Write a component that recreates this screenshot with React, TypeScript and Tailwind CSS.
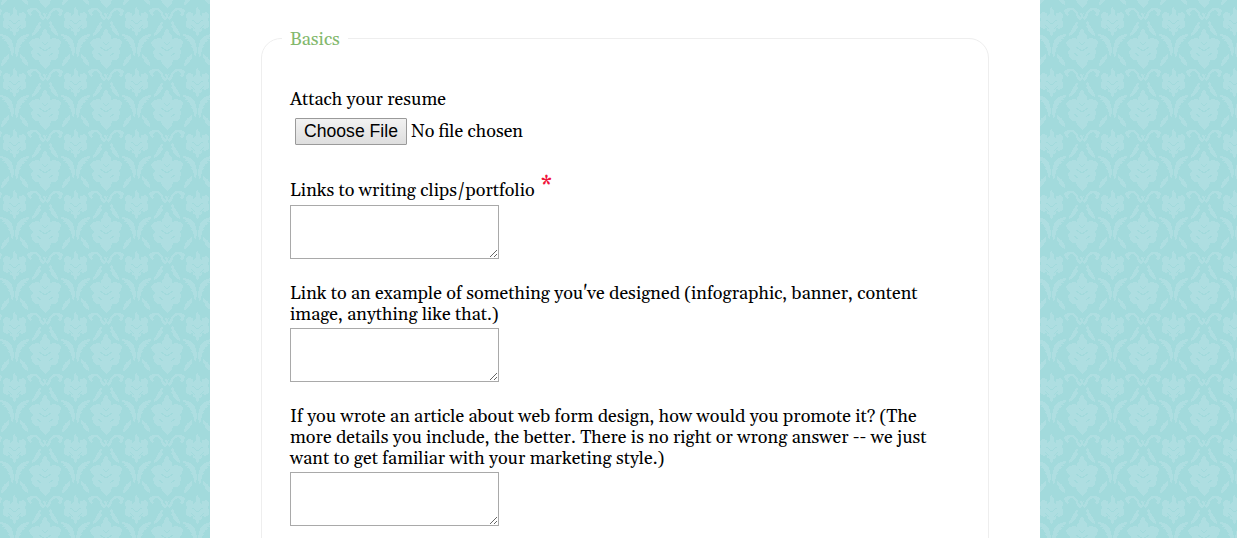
import React from 'react';

const font = "font-['Gelasio','Georgia','Liberation_Serif',serif]";
const base = '#a2dadc';

// half of the damask motif, the other half is mirrored
const LargeHalf = () => (
  <>
    <path d="M45 28l2 3 1 3 2 2 0 3 3-1 5 1 3 3-1 4-3 3 2 2-1 6-3 3-4 0-1 4-2 2-2 2-1 1z" />
    <path d="M45 51l6-4" fill="none" stroke={base} strokeWidth="1" />
    <path d="M45 45l3-3M49 56l4-3" fill="none" stroke={base} strokeWidth="1" />
  </>
);

const SmallHalf = () => (
  <>
    <path d="M14.500 7l2 3 0 4 2 2 1-3 4-1 2 2 1 3-2 2 2 4-1 4-3 2-3-1-1 3-2 1-1 3-1 1z" />
    <path d="M14.500 24l5-4M17 29l4-4" fill="none" stroke={base} strokeWidth="1" />
    {/* curl */}
    <path d="M27 10l4-2 5 0 3 2 2 3 1 3 3 2-2 2-3-2-1-4-2-3-3-1-2 1-1 2 1 2-2 1-2-2z" />
    {/* sprig */}
    <path d="M40 21l1 2-1 2 1 2-2 2 0 2-2 1-1 2-4 2 0-3 2-1-1-1 2-1-1-1 2-1 0-2 2-1 0-2z" />
    {/* feather */}
    <path d="M16 57l-1-7 1-6 2-5 4-3 5-2 2 0 0 2-3 1 1 2-3 0 1 2-3 1 0 2-2 1 1 2-2 1 0 3-1 1 0 3-1 1z" />
    {/* lower leaf */}
    <path d="M20 54l2 1 1 2 2 0 0 2 2 1 0 2 1 1 0 3-3-1-1-2-2-1 0-2-2-2z" />
  </>
);

const Motif = () => (
  <>
    <LargeHalf />
    <g transform="matrix(-1 0 0 1 90 0)"><LargeHalf /></g>
    <SmallHalf />
    <g transform="matrix(-1 0 0 1 29 0)"><SmallHalf /></g>
    {/* knot between the curls */}
    <path d="M43 13h1l1 1 1-1h1l-1 3 1 3h-1l-1-1-1 1h-1l1-3z" />
  </>
);

const offsets = [-61, 0, 61];

const Damask = () => (
  <svg className="absolute inset-0 h-full w-full" aria-hidden="true">
    <defs>
      <pattern id="damask" width="61" height="61" patternUnits="userSpaceOnUse">
        <rect width="61" height="61" fill={base} />
        <g fill="#aedee1" shapeRendering="crispEdges">
          {offsets.map(dx =>
            offsets.map(dy => (
              <g key={`${dx}-${dy}`} transform={`translate(${dx} ${dy})`}>
                <Motif />
              </g>
            ))
          )}
        </g>
      </pattern>
    </defs>
    <rect width="100%" height="100%" fill="url(#damask)" />
  </svg>
);

const Field = ({ label, required }: { label: string; required?: boolean }) => (
  <div>
    <label className={`block text-[18px] leading-[21px] text-black ${required ? 'mb-[4px]' : 'mb-[3px]'}`}>
      {label}
      {required && <span className="relative -top-[3px] ml-1.5 text-[24px] leading-none text-[#f0143c]">*</span>}
    </label>
    <textarea className="block h-[54px] w-[209px] border border-[#a9a9a9] bg-white" />
  </div>
);

export default function App() {
  return (
    <div className={`relative h-[538px] overflow-hidden ${font}`}>
      <Damask />
      <div className="relative ml-[210px] h-full w-[830px] bg-white pl-[51px] pt-[29px]">
        <fieldset className="h-[600px] w-[728px] rounded-[20px] border border-[#eeeeee] pl-[28px] pr-[42px]">
          <legend className="-ml-[8px] px-[8px] text-[18px] leading-none text-[#83b86d]">
            <span className="relative top-[2px]">Basics</span>
          </legend>
          <div className="flex flex-col">
            <div className="mt-[42px] text-[18px] leading-[21px] text-black">Attach your resume</div>
            <div className="mt-[8px] flex items-center pl-[5px] text-[18px] leading-[27px]">
              <button className="h-[27px] w-[112px] rounded-[1px] border border-[#9a9a9a] bg-gradient-to-b from-[#f2f2f2] to-[#dedede] font-['Liberation_Sans',sans-serif] text-[17.6px] leading-none text-black">
                Choose File
              </button>
              <span className="ml-[4px] text-black">No file chosen</span>
            </div>
            <div className="mt-[32px]">
              <Field label="Links to writing clips/portfolio" required />
            </div>
            <div className="mt-[24px]">
              <Field label="Link to an example of something you've designed (infographic, banner, content image, anything like that.)" />
            </div>
            <div className="mt-[24px]">
              <Field label="If you wrote an article about web form design, how would you promote it? (The more details you include, the better. There is no right or wrong answer -- we just want to get familiar with your marketing style.)" />
            </div>
          </div>
        </fieldset>
      </div>
    </div>
  );
}
